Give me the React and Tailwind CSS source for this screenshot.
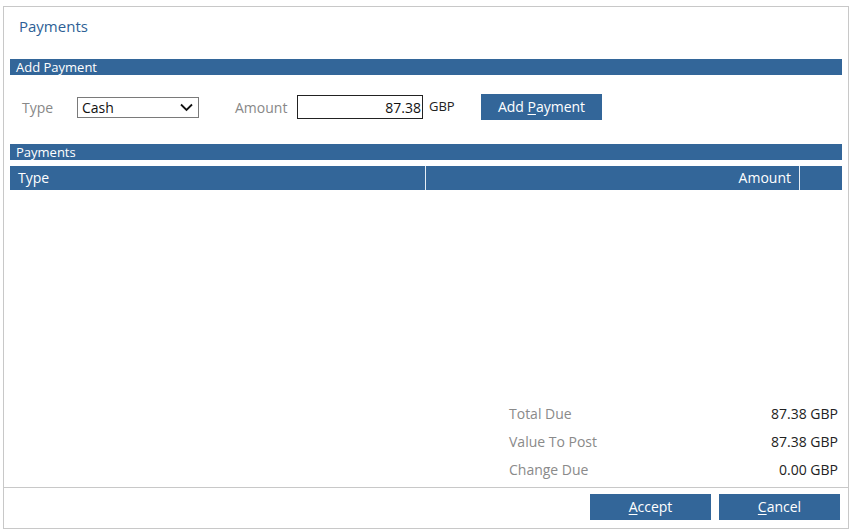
import React from "react";

const font = { fontFamily: '"Segoe UI", "Open Sans", "Noto Sans", sans-serif' };

const Bar = ({ children }) => (
  <div className="h-[16px] bg-[#336699] pl-[6px] text-[13px] leading-[16px] text-white">
    {children}
  </div>
);

const BlueButton = ({ children, className = "" }) => (
  <button
    type="button"
    className={`h-[26px] w-[121px] bg-[#336699] text-[14px] leading-[26px] text-white ${className}`}
  >
    {children}
  </button>
);

export default function App() {
  const totals = [
    { label: "Total Due", value: "87.38 GBP" },
    { label: "Value To Post", value: "87.38 GBP" },
    { label: "Change Due", value: "0.00 GBP" },
  ];

  return (
    <div className="bg-white pt-[6px] pl-[3px]" style={font}>
      <div className="flex h-[523px] w-[846px] flex-col border border-[#c8c8c8] bg-white">
        <div className="flex-1 flex flex-col px-[6px]">
          <div className="h-[52px] pt-[9px] pl-[9px] text-[15px] leading-[20px] text-[#2e5f96]">
            Payments
          </div>

          <Bar>Add Payment</Bar>

          <div className="mt-[19px] flex h-[26px] items-center text-[14px]">
            <span className="ml-[12px] w-[55px] text-[#888888]">Type</span>
            <div className="flex h-[21px] w-[122px] items-center justify-between border border-[#7a7a7a] pl-[4px] pr-[5px] text-[#111]">
              <span className="leading-[19px]">Cash</span>
              <svg width="13" height="9" viewBox="0 0 13 9" fill="none">
                <path d="M1 1.5 L6.5 7 L12 1.5" stroke="#111" strokeWidth="1.8" />
              </svg>
            </div>
            <span className="ml-[36px] w-[62px] text-[#888888]">Amount</span>
            <div className="flex h-[24px] w-[126px] items-center justify-end border border-[#222] pr-[1px] text-[#111]">
              87.38
            </div>
            <span className="ml-[6px] w-[52px] text-[13px] text-[#222]">GBP</span>
            <BlueButton>
              Add <span className="underline underline-offset-2">P</span>ayment
            </BlueButton>
          </div>

          <div className="mt-[24px]">
            <Bar>Payments</Bar>
          </div>

          <div className="mt-[6px] flex h-[24px] bg-[#336699] text-[14px] leading-[24px] text-white">
            <div className="w-[416px] border-r border-[#e6eef6] pl-[8px]">Type</div>
            <div className="w-[374px] border-r border-[#e6eef6] pr-[8px] text-right">Amount</div>
            <div className="flex-1" />
          </div>

          <div className="flex-1" />

          <div className="mb-[4px] flex flex-col text-[14px]">
            {totals.map((t) => (
              <div key={t.label} className="flex h-[28px] items-center pr-[4px]">
                <span className="ml-[499px] text-[#8a8a8a]">{t.label}</span>
                <span className="ml-auto text-[#222]">{t.value}</span>
              </div>
            ))}
          </div>
        </div>

        <div className="flex h-[41px] justify-end gap-[8px] border-t border-[#c8c8c8] pt-[6px] pr-[8px]">
          <BlueButton>
            <span className="underline underline-offset-2">A</span>ccept
          </BlueButton>
          <BlueButton>
            <span className="underline underline-offset-2">C</span>ancel
          </BlueButton>
        </div>
      </div>
    </div>
  );
}
